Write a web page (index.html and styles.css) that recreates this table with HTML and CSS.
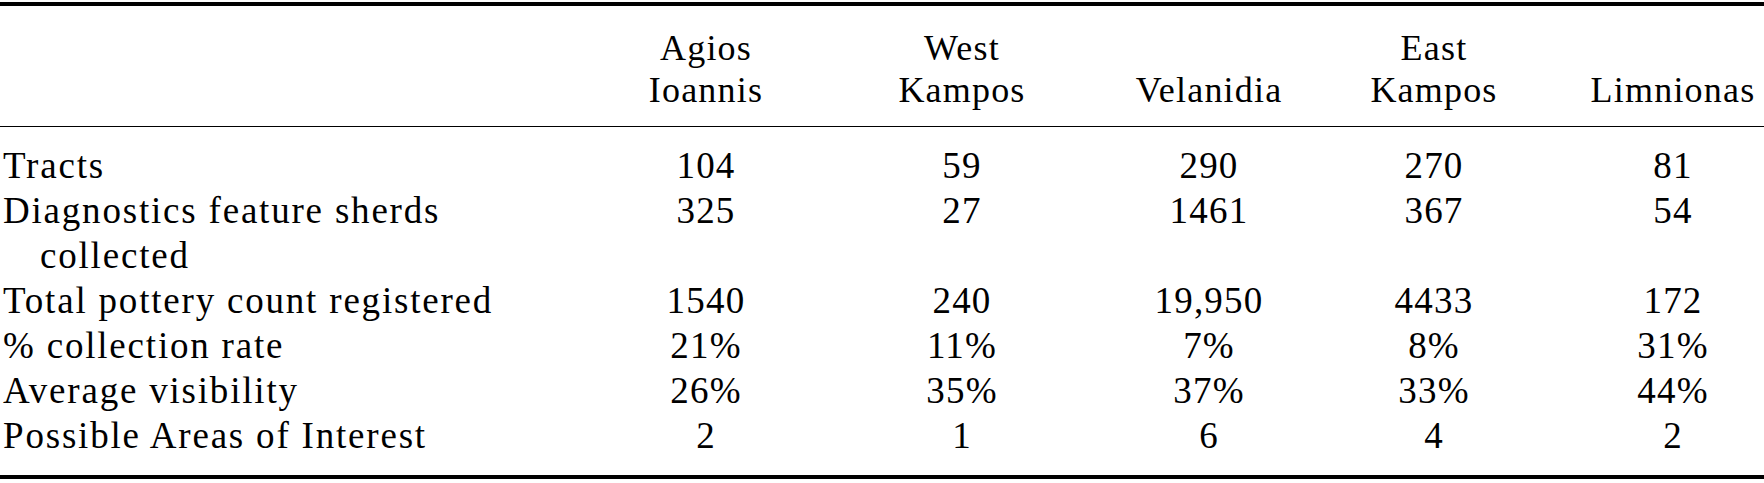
FILE: index.html
```html
<!DOCTYPE html>
<html lang="en">
<head>
<meta charset="utf-8">
<title>Survey summary</title>
<link rel="stylesheet" href="styles.css">
</head>
<body>
<table class="survey">
  <colgroup>
    <col class="c-label">
    <col class="c-a">
    <col class="c-b">
    <col class="c-c">
    <col class="c-d">
    <col class="c-e">
  </colgroup>
  <thead>
    <tr>
      <th class="lbl"></th>
      <th>Agios<br>Ioannis</th>
      <th>West<br>Kampos</th>
      <th><br>Velanidia</th>
      <th>East<br>Kampos</th>
      <th><br>Limnionas</th>
    </tr>
  </thead>
  <tbody>
    <tr class="first"><td class="lbl">Tracts</td><td>104</td><td>59</td><td>290</td><td>270</td><td>81</td></tr>
    <tr><td class="lbl hang">Diagnostics feature sherds<br>collected</td><td class="top">325</td><td class="top">27</td><td class="top">1461</td><td class="top">367</td><td class="top">54</td></tr>
    <tr><td class="lbl">Total pottery count registered</td><td>1540</td><td>240</td><td>19,950</td><td>4433</td><td>172</td></tr>
    <tr><td class="lbl">% collection rate</td><td>21%</td><td>11%</td><td>7%</td><td>8%</td><td>31%</td></tr>
    <tr><td class="lbl">Average visibility</td><td>26%</td><td>35%</td><td>37%</td><td>33%</td><td>44%</td></tr>
    <tr class="last"><td class="lbl">Possible Areas of Interest</td><td>2</td><td>1</td><td>6</td><td>4</td><td>2</td></tr>
  </tbody>
</table>
</body>
</html>
```
FILE: styles.css
```css
html, body {
  margin: 0;
  padding: 0;
  background: #fff;
}

body {
  padding-top: 2px;
  font-family: "Liberation Serif", "Times New Roman", serif;
  font-size: 37px;
  color: #000;
  font-variant-numeric: oldstyle-nums;
}

.survey {
  width: 1764px;
  table-layout: fixed;
  border-collapse: collapse;
  border-top: 4px solid #000;
  border-bottom: 4px solid #000;
}

.c-label { width: 620px; }
.c-a { width: 172px; }
.c-b { width: 340px; }
.c-c { width: 154px; }
.c-d { width: 296px; }
.c-e { width: 182px; }

.survey th,
.survey td {
  padding: 0;
  text-align: center;
  vertical-align: bottom;
  font-weight: normal;
  white-space: nowrap;
  letter-spacing: 1.2px;
}

.survey thead th {
  line-height: 42px;
  padding-top: 21px;
  padding-bottom: 15px;
  border-bottom: 1.5px solid #000;
  font-size: 36px;
}

.survey tbody td {
  line-height: 45px;
}

.survey td.top {
  vertical-align: top;
}

.survey .lbl {
  text-align: left;
  padding-left: 3px;
  letter-spacing: 1.8px;
}

.survey .hang {
  padding-left: calc(3px + 1em);
  text-indent: -1em;
}

.survey tr.first td {
  padding-top: 16px;
}

.survey tr.last td {
  padding-bottom: 17px;
}
```
